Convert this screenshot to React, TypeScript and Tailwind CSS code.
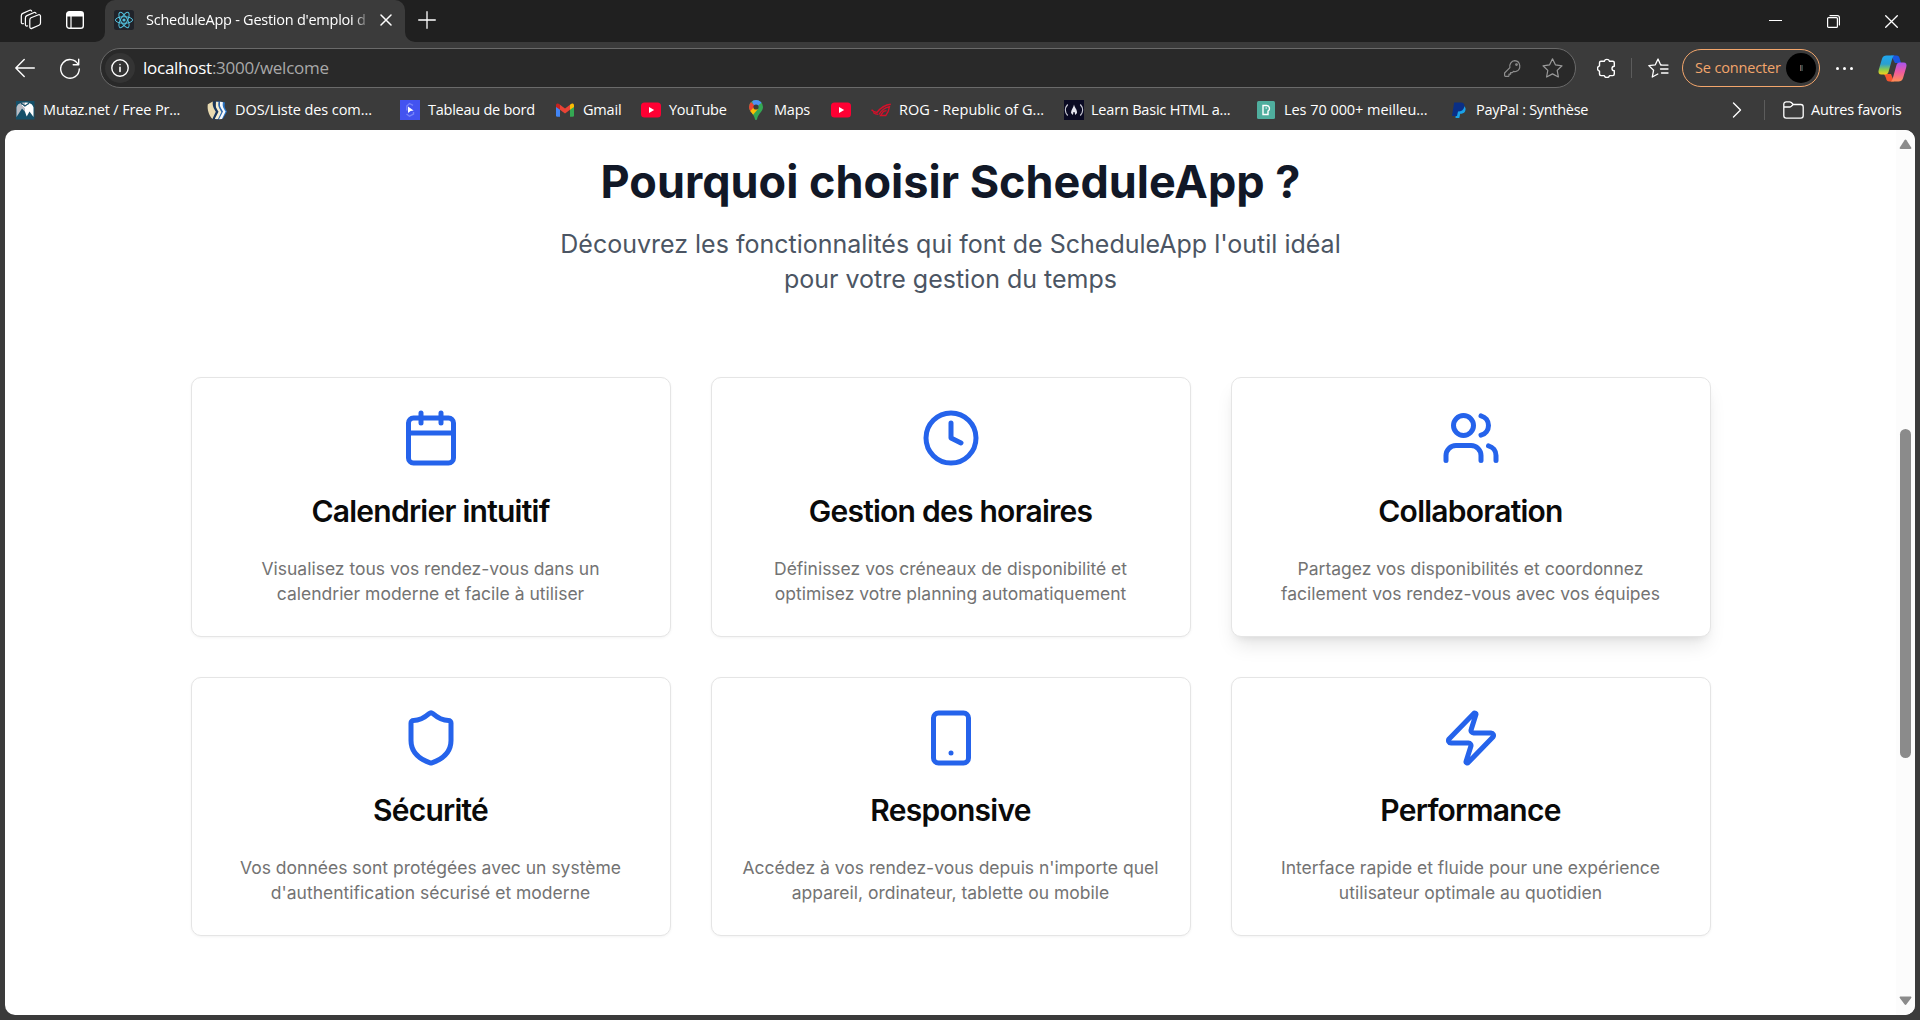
import React from "react";
import { Calendar, Clock, Users, Shield, Smartphone, Zap, type LucideIcon } from "lucide-react";

const stroke = { fill: "none", stroke: "currentColor", strokeLinecap: "round", strokeLinejoin: "round" } as const;

function WorkspacesIcon() {
  return (
    <svg width="22" height="22" viewBox="0 0 22 22" {...stroke} strokeWidth="1.2">
      <path d="M11 8.800 18.600 5.800a1.400 1.400 0 0 1 1.900 1.300v6.900a2.400 2.400 0 0 1-1.500 2.200l-7.200 3.200a1.400 1.400 0 0 1-2-1.300v-7a2.500 2.500 0 0 1 1.200-2.300z" />
      <path d="M7.600 16.900l-.5.100a1.300 1.300 0 0 1-1.700-1.200V8.900a2.500 2.500 0 0 1 1.500-2.300l7.200-3.100a1.400 1.400 0 0 1 1.900.9" />
      <path d="M3.400 14.600l-.4.100a1.300 1.300 0 0 1-1.700-1.200V6.700a2.500 2.500 0 0 1 1.500-2.300l7-3.100a1.400 1.400 0 0 1 1.900.8" />
    </svg>
  );
}

function TabActionsIcon() {
  return (
    <svg width="18" height="18" viewBox="0 0 18 18" fill="none">
      <rect x=".7" y=".7" width="16.6" height="16.6" rx="2.6" stroke="#fff" strokeWidth="1.4" />
      <path d="M.7 5.500V3.200A2.500 2.500 0 0 1 3.200.7h11.600a2.500 2.500 0 0 1 2.500 2.500v2.300z" fill="#fff" />
      <path d="M5 5v12" stroke="#fff" strokeWidth="1.200" />
    </svg>
  );
}

function ReactIcon() {
  return (
    <svg width="20" height="20" viewBox="0 0 20 20" fill="none" stroke="#53c1de" strokeWidth="1">
      <rect width="20" height="20" rx="2.500" fill="#20232a" stroke="none" />
      <ellipse cx="10" cy="10" rx="8.600" ry="3.300" />
      <ellipse cx="10" cy="10" rx="8.600" ry="3.300" transform="rotate(60 10 10)" />
      <ellipse cx="10" cy="10" rx="8.600" ry="3.300" transform="rotate(120 10 10)" />
      <circle cx="10" cy="10" r="1.600" fill="#53c1de" stroke="none" />
    </svg>
  );
}

function MutazIcon() {
  return (
    <svg width="20" height="20" viewBox="0 0 20 20">
      <rect x="1" y="1" width="18.500" height="18.500" fill="#155069" />
      <path d="M1.500 17V7.500C2.500 4 5 2.600 10 2.600v9.200L7 8.500z" fill="#b9bcc4" />
      <path d="M10 2.600c5 0 7.500 1.400 8.500 4.900V17l-4-5.600-2.800 5.200L10 11.800z" fill="#fff" />
      <path d="m1.500 19 5-6.500L10 17l-1 2z" fill="#155069" />
      <path d="M6 3.200 10 6l4-2.800" stroke="#155069" strokeWidth="1.400" fill="none" />
      <path d="m7 5 3 2.800L13 5" stroke="#fff" strokeWidth="1" fill="none" />
    </svg>
  );
}

function DosIcon() {
  return (
    <svg width="20" height="20" viewBox="0 0 20 20">
      <path d="M13.500 1.500 18 2.400c-1 4 0 6 2 9l-4 7.200-3.500.4z" fill="#2a74c4" />
      <path d="m13 1.800 3 .4c-1 4 .6 6 2.600 9.400L15 19l-3 .2z" fill="#f5f8fc" />
      <path d="m9.500 1.200 3.500.3c-1 4.400 1 6.500 3 10L12 19.300l-3 .1z" fill="#2c67ae" />
      <path d="m9 1.800 2.500.3c-1 4.400 1 6.500 2.900 10L11 19l-3 .1z" fill="#f3edd2" />
      <path d="M5.800 1.500 8.500 1.200c-1 4.500 1 7 3 10.600L7.500 19.300l-2 0z" fill="#17365e" />
      <path d="m.8 4.200 5-2.700c-.6 4.700 1 6.700 3 10.300L5.400 19C1.800 14.800 0 9.500.8 4.200z" fill="#e8dab0" />
    </svg>
  );
}

function BoardIcon() {
  return (
    <svg width="20" height="20" viewBox="0 0 20 20">
      <rect width="20" height="20" fill="#4353f0" />
      <path d="M13 5.400 9.500 3.500 6.800 6v4.500M13.500 12v2L9.500 16.200 6.500 14" fill="none" stroke="#7482f8" strokeWidth="1.400" />
      <path d="m8 6.500 5.600 4-3 .5L8 13z" fill="#fff" />
    </svg>
  );
}

function GmailIcon() {
  return (
    <svg width="20" height="20" viewBox="0 0 20 20">
      <path d="M1 5.500 5 8.300v8.400H2.300A1.300 1.300 0 0 1 1 15.400z" fill="#4285f4" />
      <path d="M15 8.300l4-2.800v9.900a1.300 1.300 0 0 1-1.300 1.300H15z" fill="#34a853" />
      <path d="M5 4.700 10 8.500l5-3.800v5L10 13.500 5 9.700z" fill="#ea4335" />
      <path d="M1 5.400C1 3.400 3 2.900 4.400 4.200L5 4.700v5L1 6.900z" fill="#c5221f" />
      <path d="M19 5.400c0-2-2-2.500-3.400-1.200l-.6.500v5l4-2.800z" fill="#fbbc04" />
    </svg>
  );
}

function YoutubeIcon() {
  return (
    <svg width="20" height="20" viewBox="0 0 20 20">
      <rect y="2.500" width="20" height="15" rx="3.500" fill="#ff0033" />
      <path d="m8 7 5.200 3L8 13z" fill="#fff" />
    </svg>
  );
}

function MapsIcon() {
  return (
    <svg width="20" height="20" viewBox="0 0 20 20">
      <clipPath id="pin">
        <path d="M10 0a7 7 0 0 1 7 7c0 4.500-4.500 6-6 12.200-.3 1.100-1.700 1.100-2 0C7.500 13 3 11.500 3 7a7 7 0 0 1 7-7z" />
      </clipPath>
      <g clipPath="url(#pin)">
        <rect width="20" height="20" fill="#34a853" />
        <path d="m8 9 9-7.500V0H6z" fill="#4f90f5" />
        <path d="M5 2 10 7l-6 6H1V2z" fill="#ea4335" />
        <path d="m3 12.500 5-5.500 4 2-6 7z" fill="#fbbc04" />
      </g>
      <circle cx="10" cy="7" r="2.600" fill="#3b3b3b" />
    </svg>
  );
}

function RogIcon() {
  return (
    <svg width="20" height="20" viewBox="0 0 20 20" fill="none" stroke="#d3102a">
      <path d="M.5 9.800c1.500 1.600 3 2.400 5.500 2.600C9.500 8 13.500 5 19.800 4.300" strokeWidth="1.500" />
      <path d="M2.200 12.600c1.500 1.200 3 1.700 5 1.700M8 14.500C10.500 10 14 7.400 18.500 6.600c-.5 3.400-1.700 6.600-3.700 8.900H9.500l3-4.200 3-.6" strokeWidth="1.300" />
    </svg>
  );
}

function CampIcon() {
  return (
    <svg width="20" height="20" viewBox="0 0 20 20" fill="none" stroke="#c9c9d4" strokeWidth="1.300">
      <rect width="20" height="20" fill="#0a0a23" stroke="none" />
      <path d="M3.700 4.500c-3 3.300-3 7.700 0 11M16.300 4.500c3 3.300 3 7.700 0 11" />
      <path d="M10 4.500c.4 3 3.200 4.500 3 8.500l-1.700 2-.8-3-1 0-.6 3L7 13c0-3.500 2.500-5 3-8.500z" fill="#e4e4ee" stroke="none" />
    </svg>
  );
}

function PexelsIcon() {
  return (
    <svg width="20" height="20" viewBox="0 0 20 20" fill="none">
      <rect x="1" y="1" width="18" height="18" rx="1.500" fill="#4fae9e" />
      <path d="M7 5.500h3.700a3 3 0 0 1 1.300 5.600v3.400H7z" stroke="#fff" strokeWidth="1.400" />
      <path d="M9.500 8h1.500" stroke="#fff" />
    </svg>
  );
}

function PaypalIcon() {
  return (
    <svg width="20" height="20" viewBox="0 0 20 20">
      <path d="M7.500 6h7.200c2.500 1.200 2.200 4 1.200 5.700-1 1.600-2.600 2-4.700 2L10.300 18H6.500z" fill="#1aa2e8" />
      <path d="M5.200 2.500h6.500c3 0 4.300 1.700 3.600 4.500-.8 3.300-3 4.500-6.300 4.500L8 16H3z" fill="#0a2f86" />
    </svg>
  );
}

type Bookmark = { icon: () => React.JSX.Element; label: string; box: string; text: string };

const bookmarks: Bookmark[] = [
  { icon: MutazIcon, label: "Mutaz.net / Free Pr...", box: "w-[192px]", text: "tracking-[-0.14px]" },
  { icon: DosIcon, label: "DOS/Liste des com...", box: "w-[193px]", text: "tracking-[-0.08px]" },
  { icon: BoardIcon, label: "Tableau de bord", box: "w-[155px]", text: "tracking-[-0.25px]" },
  { icon: GmailIcon, label: "Gmail", box: "w-[86px]", text: "tracking-[-0.2px]" },
  { icon: YoutubeIcon, label: "YouTube", box: "w-[105px]", text: "tracking-[-0.3px]" },
  { icon: MapsIcon, label: "Maps", box: "w-[85px]", text: "tracking-[-0.2px]" },
  { icon: YoutubeIcon, label: "", box: "w-[40px]", text: "" },
  { icon: RogIcon, label: "ROG - Republic of G...", box: "w-[193px]", text: "tracking-[0.05px]" },
  { icon: CampIcon, label: "Learn Basic HTML a...", box: "w-[192px]", text: "-ml-px tracking-[-0.2px]" },
  { icon: PexelsIcon, label: "Les 70 000+ meilleu...", box: "w-[193px]", text: "tracking-[-0.05px]" },
  { icon: PaypalIcon, label: "PayPal : Synthèse", box: "w-[160px]", text: "-ml-px tracking-[-0.3px]" },
];

function TitleBar() {
  return (
    <div className="flex h-[42px] shrink-0 bg-[#202020] text-white">
      <div className="flex w-[105px] items-center gap-[24px] pb-[2px] pl-[20px]">
        <WorkspacesIcon />
        <TabActionsIcon />
      </div>
      <div className="relative flex w-[300px] items-center rounded-t-[10px] bg-[#3b3b3b] pr-3 pb-[2px] pl-[9px]">
        <svg className="absolute bottom-0 -left-[10px]" width="10" height="10" viewBox="0 0 10 10">
          <path d="M10 0v10H0A10 10 0 0 0 10 0z" fill="#3b3b3b" />
        </svg>
        <svg className="absolute -right-[10px] bottom-0" width="10" height="10" viewBox="0 0 10 10">
          <path d="M0 0v10h10A10 10 0 0 1 0 0z" fill="#3b3b3b" />
        </svg>
        <ReactIcon />
        <div className="ml-[12px] w-[225px] text-[14.500px] tracking-[-0.25px] whitespace-nowrap [mask-image:linear-gradient(to_right,black_208px,transparent_224px)]">
          ScheduleApp - Gestion d'emploi d
        </div>
        <svg className="ml-[9px] shrink-0" width="12" height="12" viewBox="0 0 12 12" {...stroke} strokeWidth="1.500">
          <path d="m1 1 10 10M11 1 1 11" />
        </svg>
      </div>
      <svg className="mt-[11px] ml-[13px]" width="18" height="18" viewBox="0 0 18 18" {...stroke} strokeWidth="1.300">
        <path d="M9 .7v16.600M.7 9h16.600" />
      </svg>
      <div className="ml-auto flex items-center gap-[45px] pr-[22px]">
        <svg width="13" height="14" viewBox="0 0 13 14" {...stroke} strokeWidth="1.200">
          <path d="M.5 6.500h12" />
        </svg>
        <svg width="13" height="13" viewBox="0 0 13 13" {...stroke} strokeWidth="1.200">
          <rect x=".6" y="2.600" width="9.800" height="9.800" rx="1" />
          <path d="M3 .7h7.400a2 2 0 0 1 2 2v7.300" />
        </svg>
        <svg width="13" height="13" viewBox="0 0 13 13" {...stroke} strokeWidth="1.300">
          <path d="m.7.7 11.600 11.600M12.300.7.7 12.300" />
        </svg>
      </div>
    </div>
  );
}

function CopilotIcon() {
  return (
    <svg width="29" height="27" viewBox="0 0 29 27">
      <defs>
        <linearGradient id="cpA" x1="0" y1="0" x2="0" y2="1">
          <stop offset="0" stopColor="#1fa7f0" />
          <stop offset=".45" stopColor="#2b9fd0" />
          <stop offset=".75" stopColor="#8fcc4a" />
          <stop offset="1" stopColor="#f3d01c" />
        </linearGradient>
        <linearGradient id="cpB" x1="0" y1="0" x2="0" y2="1">
          <stop offset="0" stopColor="#a854f0" />
          <stop offset=".5" stopColor="#ee5aa0" />
          <stop offset="1" stopColor="#ff8f55" />
        </linearGradient>
      </defs>
      <path d="M8 .5h10.500c1.800 0 2.700 1.200 3.200 3L23 8h-6L13 .5z" fill="#1a56e0" />
      <path d="M6 19h7l3 7.500h-4.500C8.800 26.500 8.500 25 8 23z" fill="#f5552e" />
      <path d="M8.500.5h8c-1.400.6-1.900 2-2.500 4L10.500 17c-.5 1.600-1.400 2.500-3 2.500H3.400C.8 19.500 0 17.600.7 15L4 3.800C4.800 1.600 6.300.5 8.500.5z" fill="url(#cpA)" />
      <path d="M20.500 26.500h-8c1.400-.6 1.900-2 2.500-4L18.500 10c.5-1.600 1.400-2.500 3-2.500h4.100c2.600 0 3.400 1.900 2.700 4.500L25 23.200c-.8 2.200-2.300 3.300-4.500 3.300z" fill="url(#cpB)" />
    </svg>
  );
}

function Toolbar() {
  return (
    <div className="flex h-[52px] shrink-0 items-center text-white">
      <svg className="ml-[15px]" width="20" height="20" viewBox="0 0 20 20" {...stroke} strokeWidth="1.400">
        <path d="M19.300 10H.8M9.200 1.600.8 10l8.400 8.400" />
      </svg>
      <svg className="ml-[25px]" width="20" height="21" viewBox="0 0 20 21" {...stroke} strokeWidth="1.400">
        <path d="M18.200 6.500A9.300 9.300 0 1 0 19.300 11M18.700 1.200v5.500h-5.500" />
      </svg>
      <div className="ml-[20px] flex h-[40px] w-[1476px] items-center rounded-full border border-[#6a6a6a] bg-[#292929] pl-[4px]">
        <div className="flex size-[30px] items-center justify-center rounded-full bg-[#343434]">
          <svg width="18" height="18" viewBox="0 0 18 18" {...stroke} strokeWidth="1.400">
            <circle cx="9" cy="9" r="8.200" />
            <path d="M9 8.300v4.200M9 5.500v.1" strokeWidth="1.600" />
          </svg>
        </div>
        <div className="ml-[8px] text-[17px] tracking-[-0.26px] whitespace-nowrap text-[#a8a8a8]">
          <span className="text-white">localhost</span>:3000/welcome
        </div>
        <svg className="ml-auto text-[#8e8e8e]" width="17" height="17" viewBox="0 0 17 17" {...stroke} strokeWidth="1.200">
          <path d="M10.800.7a5.500 5.500 0 0 1 1.200 10.700 5.500 5.500 0 0 1-2.500 0L8.200 12.600H6.600v1.600H5v1.600l-.5.500H1.400a.8.800 0 0 1-.8-.8V13l5.300-5.300A5.500 5.500 0 0 1 10.800.7z" />
          <circle cx="12.500" cy="4.600" r=".8" />
        </svg>
        <svg className="mr-[12px] ml-[21px] text-[#9a9a9a]" width="21" height="20" viewBox="0 0 21 20" {...stroke} strokeWidth="1.200">
          <path d="m10.500.8 2.900 6 6.600 1-4.800 4.600 1.200 6.600-5.900-3.100L4.600 19l1.200-6.600L1 7.800l6.600-1z" />
        </svg>
      </div>
      <svg className="ml-[21px]" width="19" height="20" viewBox="0 0 19 20" {...stroke} strokeWidth="1.400">
        <path d="M4 3.300h3.300a2.700 2.700 0 0 1 5.200 0h3.300a1.500 1.500 0 0 1 1.500 1.500v3.400a2.300 2.300 0 0 0 0 4.600v3.300a1.500 1.500 0 0 1-1.500 1.500h-3.300a2.700 2.700 0 0 1-5.200 0H4a1.500 1.500 0 0 1-1.500-1.500v-3a2.700 2.700 0 0 1 0-5.200V4.800A1.500 1.500 0 0 1 4 3.300z" />
      </svg>
      <div className="ml-[15px] h-[20px] w-px bg-[#5c5c5c]" />
      <svg className="ml-[16px]" width="21" height="20" viewBox="0 0 21 20" {...stroke} strokeWidth="1.300">
        <path d="M13.500 7h-.8L10 1 7.300 6.800.8 7.600l4.800 4.600L4.300 19l5.500-3M14 7.100h6M12.500 11h7.500M13.500 15H20" />
      </svg>
      <div className="mb-px ml-[13px] flex h-[38px] w-[138px] items-center rounded-full border border-[#f3a66c] pl-[12px]">
        <span className="text-[14.500px] tracking-[-0.15px] whitespace-nowrap text-[#f3a66c]">Se connecter</span>
        <div className="mr-[3px] ml-auto flex size-[30px] items-center justify-center rounded-full bg-black">
          <div className="h-[6px] w-[3px] border-l border-[#7a5b55] bg-[#33403c]" />
        </div>
      </div>
      <div className="ml-[16px] flex gap-[4px]">
        <div className="size-[3px] rounded-full bg-white" />
        <div className="size-[3px] rounded-full bg-white" />
        <div className="size-[3px] rounded-full bg-white" />
      </div>
      <div className="ml-[25px]">
        <CopilotIcon />
      </div>
    </div>
  );
}

function BookmarksBar() {
  return (
    <div className="flex h-[36px] shrink-0 items-center pb-[4px] pl-[15px] text-[14.500px] whitespace-nowrap text-white">
      {bookmarks.map(({ icon: Icon, label, box, text }, i) => (
        <div key={i} className={`flex shrink-0 items-center gap-[8px] ${box}`}>
          <Icon />
          {label && <span className={text}>{label}</span>}
        </div>
      ))}
      <div className="mr-[19px] ml-auto flex items-center">
        <svg width="10" height="16" viewBox="0 0 10 16" {...stroke} strokeWidth="1.400">
          <path d="m1.500 1 7 7-7 7" />
        </svg>
        <div className="ml-[22px] h-[20px] w-px bg-[#5c5c5c]" />
        <svg className="ml-[18px]" width="21" height="18" viewBox="0 0 21 18" {...stroke} strokeWidth="1.300">
          <path d="M.8 5.700V3.200A2.400 2.400 0 0 1 3.200.8h3.400c.7 0 1.200.3 1.700.7l2 2H17.800a2.400 2.400 0 0 1 2.400 2.400v8.900a2.400 2.400 0 0 1-2.400 2.400H3.200A2.400 2.400 0 0 1 .8 14.800zM.8 6h5.800c.7 0 1.200-.3 1.700-.7l2-1.800" />
        </svg>
        <span className="ml-[7px] w-[90px] tracking-[-0.2px]">Autres favoris</span>
      </div>
    </div>
  );
}

type Feature = { icon: LucideIcon; title: string; lines: [string, string]; raised?: boolean };

const features: Feature[] = [
  { icon: Calendar, title: "Calendrier intuitif", lines: ["Visualisez tous vos rendez-vous dans un", "calendrier moderne et facile à utiliser"] },
  { icon: Clock, title: "Gestion des horaires", lines: ["Définissez vos créneaux de disponibilité et", "optimisez votre planning automatiquement"] },
  { icon: Users, title: "Collaboration", lines: ["Partagez vos disponibilités et coordonnez", "facilement vos rendez-vous avec vos équipes"], raised: true },
  { icon: Shield, title: "Sécurité", lines: ["Vos données sont protégées avec un système", "d'authentification sécurisé et moderne"] },
  { icon: Smartphone, title: "Responsive", lines: ["Accédez à vos rendez-vous depuis n'importe quel", "appareil, ordinateur, tablette ou mobile"] },
  { icon: Zap, title: "Performance", lines: ["Interface rapide et fluide pour une expérience", "utilisateur optimale au quotidien"] },
];

function FeatureCard({ icon: Icon, title, lines, raised }: Feature) {
  const shadow = raised
    ? "shadow-[0_12px_19px_-4px_rgba(0,0,0,0.1),0_5px_8px_-5px_rgba(0,0,0,0.1)]"
    : "shadow-[0_1px_3px_rgba(0,0,0,0.05)]";
  return (
    <div className={`flex h-[259.500px] flex-col items-center rounded-[10px] border border-[#e5e5e5] bg-white pt-[30px] text-center ${shadow}`}>
      <Icon size={60} className="text-[#2563eb]" />
      <h3 className="mt-[27.500px] text-[30px] leading-[30px] font-semibold tracking-[-0.75px] text-neutral-950">{title}</h3>
      <p className="mt-[30px] text-[17.500px] leading-[25px] text-[#737373]">
        {lines[0]}
        <br />
        {lines[1]}
      </p>
    </div>
  );
}

function Page() {
  return (
    <div className="mx-[5px] mb-[5px] flex min-h-0 flex-1 overflow-hidden rounded-[10px] bg-white">
      <main className="flex-1 pt-[27px] font-['Inter',sans-serif]">
        <h2 className="text-center text-[45px] leading-[50px] font-bold text-[#111827]">
          Pourquoi choisir ScheduleApp ?
        </h2>
        <p className="mt-[20px] text-center text-[25px] leading-[35px] text-[#4b5563]">
          Découvrez les fonctionnalités qui font de ScheduleApp l'outil idéal
          <br />
          pour votre gestion du temps
        </p>
        <div className="mx-auto mt-[80px] grid w-[1520px] grid-cols-3 gap-[40px]">
          {features.map((f) => (
            <FeatureCard key={f.title} {...f} />
          ))}
        </div>
      </main>
      <div className="flex w-[19px] flex-col items-center bg-[#fcfcfc] py-[9px]">
        <svg width="13" height="11" viewBox="0 0 13 11" fill="#8b8b8b">
          <path d="M5.500 1.200a1.200 1.200 0 0 1 2 0l4.700 7.200c.5.900.1 1.600-.9 1.600H1.700C.7 10 .3 9.300.8 8.400z" />
        </svg>
        <div className="mt-[279px] h-[329px] w-[11px] rounded-full bg-[#8b8b8b]" />
        <svg className="mt-auto" width="13" height="11" viewBox="0 0 13 11" fill="#8b8b8b">
          <path d="M5.500 9.300a1.200 1.200 0 0 0 2 0l4.700-6.200c.5-.9.1-1.600-.9-1.600H1.700c-1 0-1.400.7-.9 1.600z" />
        </svg>
      </div>
    </div>
  );
}

export default function App() {
  return (
    <div className="flex h-[1020px] w-[1920px] flex-col overflow-hidden bg-[#3b3b3b] font-['Open_Sans','Noto_Sans',sans-serif]">
      <TitleBar />
      <Toolbar />
      <BookmarksBar />
      <Page />
    </div>
  );
}
